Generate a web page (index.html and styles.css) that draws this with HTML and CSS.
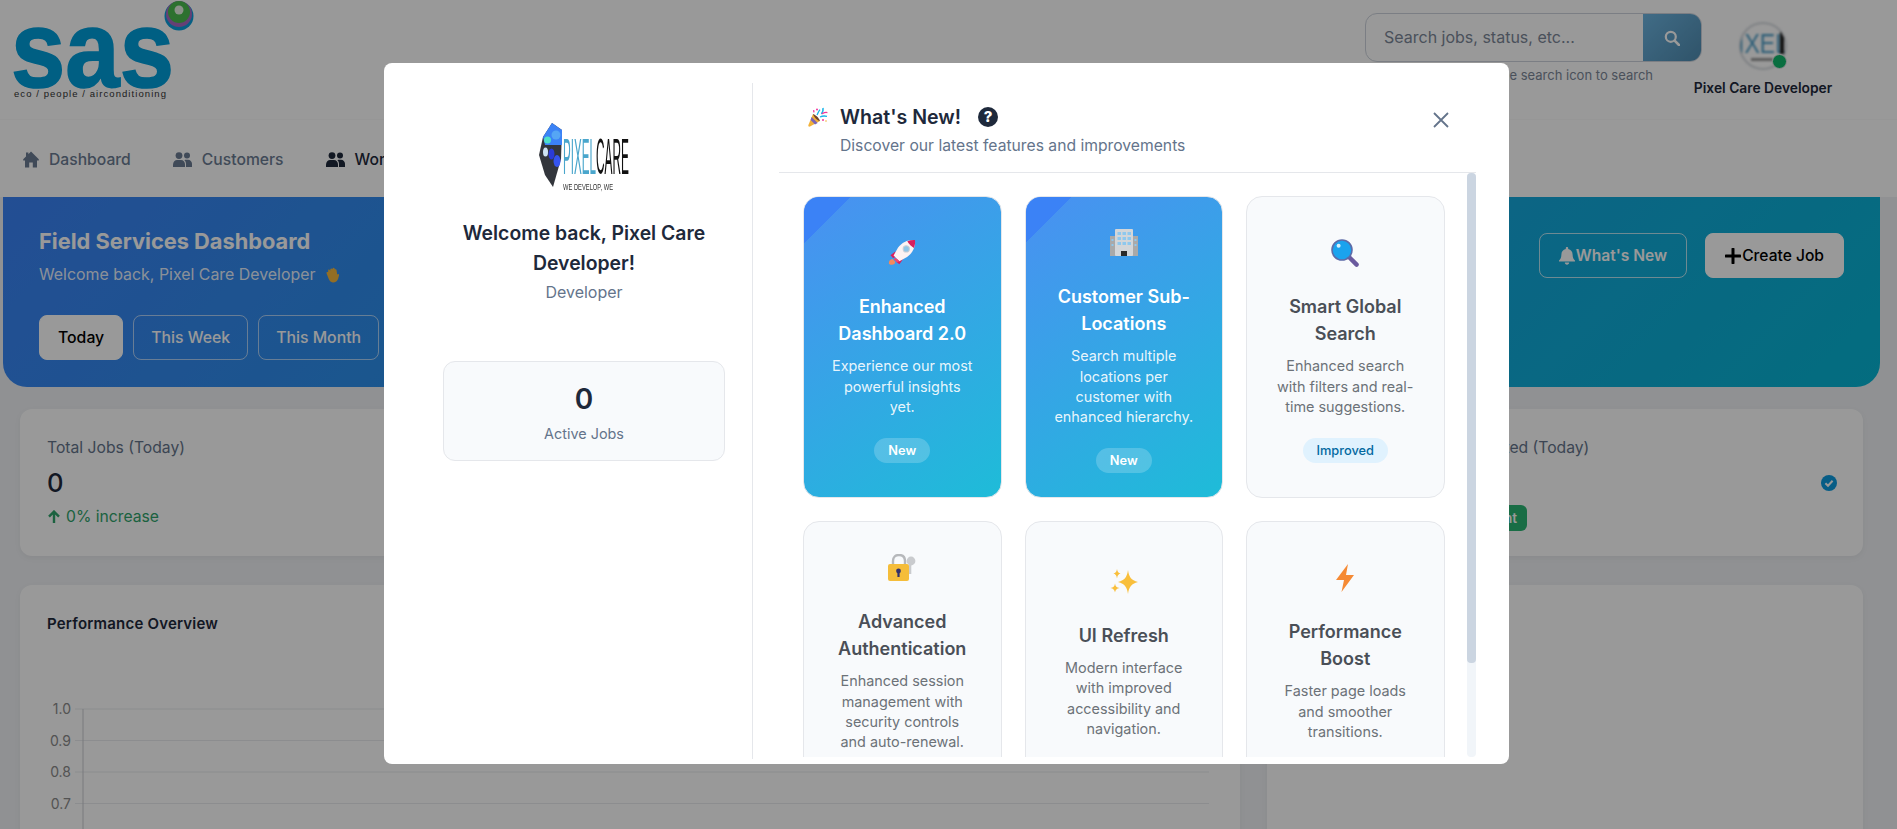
FILE: index.html
```html
<!DOCTYPE html>
<html lang="en">
<head>
    <meta charset="UTF-8">
    <meta name="viewport" content="width=device-width, initial-scale=1.0">
    <title>Field Services Dashboard</title>
    <link rel="stylesheet" href="styles.css">
</head>
<body>
    <header class="top-header">
        <svg class="brand" viewBox="0 0 200 110" width="200" height="110">
            <circle cx="179" cy="16" r="14.5" fill="#0a9fdc"/>
            <circle cx="179" cy="14" r="13" fill="#a86bc4"/>
            <circle cx="179" cy="12" r="11" fill="#4bbd4f"/>
            <circle cx="179" cy="10" r="4.5" fill="#e8f2e4"/>
            <text class="brand-word" x="11" y="74" textLength="163" lengthAdjust="spacingAndGlyphs" transform="scale(1 1.17)">sas</text>
            <text class="brand-tag" x="14" y="97" textLength="152">eco / people / airconditioning</text>
        </svg>
        <div class="header-right">
            <div class="search-col">
                <div class="search-box">
                    <span class="search-text">Search jobs, status, etc...</span>
                    <span class="search-btn">
                        <svg viewBox="0 0 16 16" width="16" height="16"><circle cx="6.8" cy="6.8" r="5" fill="none" stroke="#fff" stroke-width="2.2"/><path d="M10.6 10.6L15 15" stroke="#fff" stroke-width="2.6" stroke-linecap="round"/></svg>
                    </span>
                </div>
                <div class="search-hint">Press Enter or click the search icon to search</div>
            </div>
            <div class="user-col">
                <div class="avatar">
                    <svg viewBox="0 0 48 48" width="48" height="48">
                        <clipPath id="avatar-clip"><circle cx="24" cy="24" r="22.5"/></clipPath>
                        <circle cx="24" cy="24" r="23" fill="#fff" stroke="#d5d9de" stroke-width="2"/>
                        <g clip-path="url(#avatar-clip)">
                            <text class="avatar-word" x="24" y="31" text-anchor="middle" textLength="50" lengthAdjust="spacingAndGlyphs">IXEL</text>
                            <rect x="41" y="10" width="4" height="22" fill="#222"/>
                            <rect x="12" y="36" width="22" height="3" fill="#999"/>
                        </g>
                    </svg>
                    <span class="status-dot"></span>
                </div>
                <div class="user-name">Pixel Care Developer</div>
            </div>
        </div>
    </header>

    <nav class="main-nav">
        <a class="nav-link">
            <svg viewBox="0 0 16 17" width="16" height="17"><path d="M8 .6L15.8 8.2V9.4H14V16.4H9.8V11.4H6.2V16.4H2V9.4H.2V8.2L3 5.4V1.6H5.4V3.2Z" fill="currentColor"/></svg>
            Dashboard
        </a>
        <a class="nav-link">
            <svg viewBox="0 0 19 15" width="19" height="15"><use href="#people"/></svg>
            Customers
        </a>
        <a class="nav-link active">
            <svg viewBox="0 0 19 15" width="19" height="15"><use href="#people"/></svg>
            Work Orders
        </a>
    </nav>

    <svg class="defs"><defs>
        <g id="people" fill="currentColor">
            <circle cx="6" cy="3.6" r="3.4"/>
            <circle cx="14" cy="3.6" r="3"/>
            <path d="M0 15V12.6C0 9.8 2 8 4 8H8C10.2 8 12 9.8 12 12.6V15Z"/>
            <path d="M13 15V12C13 10.4 12.4 9 11.4 8.2 12 7.9 12.6 7.8 13.2 7.8H15C17.2 7.8 19 9.6 19 11.8V15Z"/>
        </g>
    </defs></svg>

    <section class="hero">
        <div>
            <h1>Field Services Dashboard</h1>
            <p class="hero-sub">Welcome back, Pixel Care Developer
                <svg class="hand" viewBox="0 0 14 15" width="15" height="16"><path d="M3 2.5C3.8 2 4.4 2.6 4.8 3.4L5 2C5.6 1 6.6 1.2 6.9 2.2L7.2 1.2C7.8.4 8.8.6 9 1.6L9.2 2.4C9.8 1.8 10.8 2.2 10.8 3.2L11.4 7C12 6.2 13.2 6.4 13.2 7.4 12.8 8.8 12.6 10.4 11.8 12 10.8 14 8.6 15 6.6 14.4 4.8 13.8 3.8 12.2 3.2 10.6L1.4 5.8C1.2 4.8 2.2 4.2 2.9 5Z" fill="#f5b83d"/></svg>
            </p>
            <div class="range-row">
                <button class="range-btn selected">Today</button>
                <button class="range-btn">This Week</button>
                <button class="range-btn">This Month</button>
            </div>
        </div>
        <div class="hero-actions">
            <button class="action-btn outline">
                <svg viewBox="0 0 16 18" width="16" height="18"><path d="M8 0C8.8 0 9.2.6 9.2 1.2V1.9C12 2.4 13.6 4.6 13.6 7.4 13.6 10.6 14.6 12 16 13.6V14.6H0V13.6C1.4 12 2.4 10.6 2.4 7.4 2.4 4.6 4 2.4 6.8 1.9V1.2C6.8.6 7.2 0 8 0ZM5.8 15.6H10.2C10.2 16.9 9.2 17.8 8 17.8S5.8 16.9 5.8 15.6Z" fill="currentColor"/></svg>
                What's New
            </button>
            <button class="action-btn solid">
                <svg viewBox="0 0 16 16" width="16" height="16"><path d="M8 1V15M1 8H15" stroke="currentColor" stroke-width="3" stroke-linecap="round"/></svg>
                Create Job
            </button>
        </div>
    </section>

    <section class="stats">
        <div class="stat">
            <div class="stat-label">Total Jobs (Today)</div>
            <div class="stat-value">0</div>
            <div class="stat-trend">
                <svg viewBox="0 0 14 14" width="14" height="14"><path d="M7 13V2M2 6.6L7 1.6L12 6.6" fill="none" stroke="currentColor" stroke-width="2.4"/></svg>
                0% increase
            </div>
        </div>
        <div class="stat"></div>
        <div class="stat"></div>
        <div class="stat">
            <div class="stat-label">Completed (Today)</div>
            <div class="stat-line">
                <div class="stat-value">0</div>
                <svg viewBox="0 0 16 16" width="16" height="16"><circle cx="8" cy="8" r="8" fill="#0d9be0"/><path d="M4.4 8.2L7 10.8L11.6 5.8" fill="none" stroke="#fff" stroke-width="2"/></svg>
            </div>
            <span class="stat-badge">Excellent</span>
        </div>
    </section>

    <section class="lower">
        <div class="panel">
            <h3>Performance Overview</h3>
            <svg class="chart" viewBox="0 0 1166 200" width="1166" height="200">
                <g class="grid-lines">
                    <path d="M28 18H1162M28 49.5H1162M28 81H1162M28 112.5H1162M28 144H1162"/>
                </g>
                <path class="axis" d="M36 18V200"/>
                <g class="tick-labels">
                    <text x="24" y="23">1.0</text>
                    <text x="24" y="55">0.9</text>
                    <text x="24" y="86">0.8</text>
                    <text x="24" y="118">0.7</text>
                </g>
            </svg>
        </div>
        <div class="panel"></div>
    </section>

    <div class="overlay">
        <div class="modal">
            <aside class="modal-side">
                <svg class="side-logo" viewBox="0 0 90 70" width="90" height="70">
                    <path d="M13 0L23 7L22 36L14 64L6 52L0 32L4 14Z" fill="#33363c"/>
                    <path d="M13 0L23 7V22H6L4 14Z" fill="#3b82f6"/>
                    <circle cx="8.5" cy="17" r="3.5" fill="#4de0c8"/>
                    <circle cx="17" cy="12" r="4.5" fill="#55a6f5"/>
                    <ellipse cx="6.5" cy="29" rx="2.5" ry="4.5" fill="#cfe3f2"/>
                    <ellipse cx="12.5" cy="31" rx="3" ry="5.5" fill="#2a3bd8"/>
                    <ellipse cx="18" cy="38" rx="3.5" ry="6" fill="#3554ee"/>
                    <text class="logo-pixel" x="24" y="51" textLength="33" lengthAdjust="spacingAndGlyphs">PIXEL</text>
                    <text class="logo-care" x="57" y="51" textLength="33" lengthAdjust="spacingAndGlyphs">CARE</text>
                    <text class="logo-tag" x="24" y="67" textLength="50" lengthAdjust="spacingAndGlyphs">WE DEVELOP, WE</text>
                </svg>
                <h2 class="side-title">Welcome back, Pixel Care Developer!</h2>
                <div class="side-role">Developer</div>
                <div class="side-stat">
                    <div class="side-num">0</div>
                    <div class="side-stat-label">Active Jobs</div>
                </div>
            </aside>

            <div class="modal-main">
                <div class="modal-head">
                    <div class="head-text">
                        <div class="head-title">
                            <svg class="popper" viewBox="0 0 20 20" width="20" height="20">
                                <path d="M5 7L12 14L2 19.6C.8 20 0 19.2.4 18Z" fill="#f2b138"/>
                                <path d="M3.6 10L9.6 16L7 17.4L2.6 13Z" fill="#7a64b8"/>
                                <path d="M5 7C7.4 7.6 11 11 12 14C10 14 6.4 11 5 7Z" fill="#70432d"/>
                                <path d="M9 8C10 6 10.4 4.4 12 2.6M12 10C14 9 16 8.6 19 9.4" fill="none" stroke="#18b4ea" stroke-width="1.3"/>
                                <path d="M13.4 7C14.6 5.6 15.4 3.4 15 1" fill="none" stroke="#18b4ea" stroke-width="1.6"/>
                                <path d="M14 6.6C15.8 5.8 17 5 19.4 5.6M5.6 3.2L6 5.4" fill="none" stroke="#f0389b" stroke-width="1.3"/>
                                <circle cx="9" cy="2.4" r="1" fill="#f0389b"/>
                                <circle cx="15" cy="13" r="1" fill="#f0389b"/>
                                <circle cx="18" cy="14" r=".8" fill="#f2b138"/>
                            </svg>
                            <span>What's New!</span>
                            <svg class="help" viewBox="0 0 20 20" width="20" height="20">
                                <circle cx="10" cy="10" r="10" fill="#1e293b"/>
                                <text x="10" y="15.4" text-anchor="middle">?</text>
                            </svg>
                        </div>
                        <p class="head-sub">Discover our latest features and improvements</p>
                    </div>
                    <svg class="close" viewBox="0 0 16 16" width="16" height="16"><path d="M1 1L15 15M15 1L1 15" stroke="#64748b" stroke-width="1.8"/></svg>
                </div>

                <div class="feature-wrap">
                    <div class="feature-scroll">
                        <div class="feature-grid">
                            <div class="feature hot">
                                <div class="feature-icon">
                                    <svg viewBox="1 0 27 27" width="28" height="28">
                                        <path d="M2 24C1.4 21.6 3 19.6 5.4 19.4L8 22C8 24.6 5 26 2 24Z" fill="#f58a5c"/>
                                        <path d="M8 12L3.4 15.6L6 18.6L10 16Z" fill="#d81f5e"/>
                                        <path d="M15.4 19.6L12 24.4L8.8 22L11 17Z" fill="#d81f5e"/>
                                        <path d="M27 1C27.6 7 25 13.4 19.4 17.4L12 21.4L6.4 15.8L10.6 8.4C14.4 3 20.8.4 27 1Z" fill="#fdf3f3"/>
                                        <path d="M27 1C27.4 3.4 27 6 26 8.6C24 7.6 21 5 19.6 2.2C22 1.2 24.6.8 27 1Z" fill="#d81f5e"/>
                                        <path d="M8 18.2L12 21.4L9.6 22.6L6.6 19.6Z" fill="#f0476f"/>
                                        <circle cx="18.6" cy="9.6" r="3" fill="#90c6e8" stroke="#c9cfd6"/>
                                    </svg>
                                </div>
                                <h4>Enhanced Dashboard 2.0</h4>
                                <p>Experience our most powerful insights yet.</p>
                                <span class="tag">New</span>
                            </div>
                            <div class="feature hot">
                                <div class="feature-icon">
                                    <svg viewBox="0 0 28 28" width="28" height="28">
                                        <rect x="0" y="7" width="28" height="20" fill="#a9a9a9"/>
                                        <rect x="5" y="0" width="18" height="27" rx="1" fill="#d3d6d9"/>
                                        <g fill="#8ec8ee">
                                            <rect x="7.5" y="3" width="3.5" height="3"/><rect x="12.5" y="3" width="3.5" height="3"/><rect x="17.5" y="3" width="3.5" height="3"/>
                                            <rect x="7.5" y="8" width="3.5" height="3"/><rect x="12.5" y="8" width="3.5" height="3"/><rect x="17.5" y="8" width="3.5" height="3"/>
                                            <rect x="7.5" y="13" width="3.5" height="3"/><rect x="12.5" y="13" width="3.5" height="3"/><rect x="17.5" y="13" width="3.5" height="3"/>
                                            <rect x="1.5" y="10" width="2" height="2"/><rect x="1.5" y="15" width="2" height="2"/><rect x="24.5" y="10" width="2" height="2"/><rect x="24.5" y="15" width="2" height="2"/>
                                        </g>
                                        <rect x="11" y="22" width="6" height="5" fill="#2a2a2a"/>
                                    </svg>
                                </div>
                                <h4>Customer Sub-Locations</h4>
                                <p>Search multiple locations per customer with enhanced hierarchy.</p>
                                <span class="tag">New</span>
                            </div>
                            <div class="feature">
                                <div class="feature-icon">
                                    <svg viewBox="0 0 28 28" width="28" height="28">
                                        <path d="M18 18L25.6 25.6" stroke="#6a5a9e" stroke-width="4.4" stroke-linecap="round"/>
                                        <circle cx="11" cy="11" r="10" fill="#1aa3ee" stroke="#5c6ba8" stroke-width="1.6"/>
                                        <circle cx="7.6" cy="6.8" r="2" fill="#d6f2ff"/>
                                    </svg>
                                </div>
                                <h4>Smart Global Search</h4>
                                <p>Enhanced search with filters and real-time suggestions.</p>
                                <span class="tag light">Improved</span>
                            </div>
                            <div class="feature">
                                <div class="feature-icon">
                                    <svg viewBox="0 0 28 28" width="28" height="28">
                                        <path d="M22 7V20" stroke="#c9cbce" stroke-width="2.6"/>
                                        <circle cx="23" cy="7" r="4.4" fill="#c9cbce"/>
                                        <path d="M5 12V7C5 3 7.4 1 11 1S17 3 17 7V12" fill="none" stroke="#b6b8bb" stroke-width="2.4"/>
                                        <rect x="0" y="10" width="21" height="17" rx="2" fill="#f5bd3a"/>
                                        <circle cx="10.5" cy="17" r="2.4" fill="#34306b"/>
                                        <rect x="9.4" y="17" width="2.2" height="6" fill="#34306b"/>
                                    </svg>
                                </div>
                                <h4>Advanced Authentication</h4>
                                <p>Enhanced session management with security controls<br>and auto-renewal.</p>
                                <span class="tag light">Improved</span>
                            </div>
                            <div class="feature">
                                <div class="feature-icon">
                                    <svg viewBox="0 0 28 26" width="28" height="26">
                                        <path d="M18 1C19 8 21 11 28 13C21 15 19 18 18 25C17 18 15 15 8 13C15 11 17 8 18 1Z" fill="#f9bf3c"/>
                                        <path d="M7 0C7.5 3 8.6 4 10.6 4.6C8.6 5.2 7.5 6.2 7 9.4C6.5 6.2 5.4 5.2 3.4 4.6C5.4 4 6.5 3 7 0Z" fill="#f9bf3c"/>
                                        <path d="M5 14.4C5.5 17.4 6.6 18.4 9.6 19C6.6 19.6 5.5 20.6 5 23.6C4.5 20.6 3.4 19.6 .4 19C3.4 18.4 4.5 17.4 5 14.4Z" fill="#f9bf3c"/>
                                    </svg>
                                </div>
                                <h4>UI Refresh</h4>
                                <p>Modern interface with improved accessibility and navigation.</p>
                                <span class="tag light">Improved</span>
                            </div>
                            <div class="feature">
                                <div class="feature-icon">
                                    <svg viewBox="0 0 28 28" width="28" height="28">
                                        <path d="M17 0L5 16H13L10.5 28L23 11H15Z" fill="#f58a35"/>
                                    </svg>
                                </div>
                                <h4>Performance Boost</h4>
                                <p>Faster page loads and smoother transitions.</p>
                                <span class="tag light">Improved</span>
                            </div>
                        </div>
                    </div>
                    <div class="bar"><div class="bar-thumb"></div></div>
                </div>
            </div>
        </div>
    </div>
</body>
</html>
```

FILE: styles.css
```css
* {
    box-sizing: border-box;
}
html, body {
    height: 829px;
    overflow: hidden;
}
body {
    margin: 0;
    font-family: Inter, "Noto Sans", sans-serif;
    background-color: #f0f2f5;
    color: #1e293b;
}
h1, h2, h3, h4, p {
    margin: 0;
}
button {
    font-family: inherit;
}
.defs {
    display: block;
    width: 0;
    height: 0;
}

/* header */
.top-header {
    height: 120px;
    background: #fff;
    border-bottom: 1px solid #fafafa;
    display: flex;
    justify-content: space-between;
    padding: 0 73px 0 0;
}
.brand-word {
    font-family: "Liberation Sans", Arial, sans-serif;
    font-weight: 700;
    font-size: 93px;
    fill: #009edb;
    stroke: #009edb;
    stroke-width: 1.4px;
}
.brand-tag {
    font-family: "Liberation Sans", Arial, sans-serif;
    font-size: 9.5px;
    fill: #333;
}
.header-right {
    display: flex;
    padding-top: 13px;
}
.search-col {
    width: 337px;
}
.search-box {
    height: 49px;
    display: flex;
    border: 1px solid #cdd3dc;
    border-radius: 12px;
    overflow: hidden;
}
.search-text {
    flex: 1;
    padding-left: 18px;
    line-height: 47px;
    font-size: 16px;
    color: #7c8798;
}
.search-btn {
    width: 58px;
    display: flex;
    align-items: center;
    justify-content: center;
    background: linear-gradient(135deg, #6cb4e0, #4f8bb0);
}
.search-hint {
    margin-top: 4px;
    padding-right: 49px;
    line-height: 18px;
    font-size: 13px;
    text-align: right;
    color: #7c8798;
    white-space: nowrap;
}
.user-col {
    width: 122px;
    padding-top: 9px;
    display: flex;
    flex-direction: column;
    align-items: center;
}
.avatar {
    position: relative;
    width: 48px;
    height: 48px;
}
.avatar svg {
    display: block;
    filter: blur(0.8px);
}
.avatar-word {
    font-family: "Liberation Sans", Arial, sans-serif;
    font-size: 28px;
    fill: #4f9fc8;
}
.status-dot {
    position: absolute;
    right: 0;
    bottom: 1px;
    width: 15px;
    height: 15px;
    border-radius: 50%;
    background: #0fb76b;
    border: 1px solid #e8e8e8;
}
.user-name {
    margin-top: 8px;
    font-size: 13.8px;
    font-weight: 600;
    line-height: 20px;
    white-space: nowrap;
}

/* nav */
.main-nav {
    height: 77px;
    background: #fff;
    display: flex;
    align-items: center;
    gap: 42px;
    padding: 1px 0 0 23px;
}
.nav-link {
    display: flex;
    align-items: center;
    gap: 10px;
    font-size: 15.7px;
    font-weight: 500;
    color: #6b7c93;
    white-space: nowrap;
}
.nav-link.active {
    color: #1e293b;
}

/* hero */
.hero {
    height: 190px;
    width: 1877px;
    margin-left: 3px;
    padding: 25px 36px 27px;
    display: flex;
    justify-content: space-between;
    align-items: flex-start;
    background: linear-gradient(135deg, #3b82f6, #06b6d4);
    border-radius: 0 0 24px 24px;
    color: #fff;
}
.hero h1 {
    font-size: 21.8px;
    font-weight: 700;
    line-height: 36px;
    padding-top: 1px;
}
.hero-sub {
    margin-top: 4px;
    font-size: 15.9px;
    line-height: 24px;
    color: rgba(255, 255, 255, 0.9);
}
.hand {
    margin-left: 5px;
    vertical-align: -3px;
}
.range-row {
    display: flex;
    gap: 10px;
    margin-top: 28px;
}
.range-btn {
    height: 45px;
    padding: 0 17px;
    background: transparent;
    border: 1px solid rgba(255, 255, 255, 0.6);
    border-radius: 8px;
    color: #fff;
    font-size: 15.8px;
    font-weight: 500;
}
.range-btn.selected {
    padding: 0 18px;
    background: #fff;
    border-color: #fff;
    color: #000;
}
.hero-actions {
    display: flex;
    gap: 18px;
    margin-top: 11px;
}
.action-btn {
    height: 45px;
    padding: 0 19px;
    display: flex;
    align-items: center;
    gap: 1px;
    border-radius: 8px;
    font-size: 15.6px;
    font-weight: 600;
}
.action-btn.outline {
    background: transparent;
    border: 1px solid rgba(255, 255, 255, 0.7);
    color: #fff;
}
.action-btn.solid {
    background: #fff;
    border: 1px solid #fff;
    color: #000;
    font-weight: 500;
}

/* stats */
.stats {
    display: grid;
    grid-template-columns: repeat(4, 1fr);
    gap: 24px;
    margin: 22px 34px 0 20px;
}
.stat {
    height: 147px;
    padding: 27px;
    background: #fff;
    border-radius: 12px;
    box-shadow: 0 2px 6px rgba(0, 0, 0, 0.05);
}
.stat-label {
    font-size: 15.7px;
    line-height: 24px;
    color: #64748b;
}
.stat-value {
    margin-top: 5px;
    font-size: 25.6px;
    font-weight: 500;
    line-height: 36px;
}
.stat-trend {
    margin-top: 4px;
    display: flex;
    align-items: center;
    gap: 5px;
    font-size: 15.7px;
    line-height: 24px;
    color: #2fa36b;
}
.stat-line {
    display: flex;
    justify-content: space-between;
    align-items: center;
}
.stat-line svg {
    margin-top: 5px;
    margin-right: -1px;
}
.stat-badge {
    display: inline-block;
    margin-top: 4px;
    padding: 0 10px;
    height: 26px;
    line-height: 26px;
    border-radius: 6px;
    background: #2bb673;
    color: #fff;
    font-size: 13.6px;
    font-weight: 600;
}

/* lower panels */
.lower {
    display: grid;
    grid-template-columns: 1220px 1fr;
    gap: 27px;
    margin: 29px 34px 0 20px;
}
.panel {
    height: 400px;
    padding: 29px 27px;
    background: #fff;
    border-radius: 12px;
    box-shadow: 0 2px 6px rgba(0, 0, 0, 0.05);
}
.panel h3 {
    font-size: 15px;
    font-weight: 600;
    line-height: 20px;
    letter-spacing: 0.2px;
}
.chart {
    display: block;
    margin-top: 57px;
}
.grid-lines path {
    stroke: #e9ebee;
    fill: none;
}
.axis {
    stroke: #c9ccd1;
    fill: none;
}
.tick-labels text {
    font-size: 14px;
    fill: #8a8a8a;
    text-anchor: end;
}

/* modal */
.overlay {
    position: fixed;
    inset: 0;
    background: rgba(0, 0, 0, 0.4);
    padding: 63px 0 0 384px;
}
.modal {
    width: 1125px;
    height: 701px;
    background: #fff;
    border-radius: 8px;
    display: flex;
    padding: 20px 33px 5px 30px;
}
.modal-side {
    width: 339px;
    padding: 40px 27px 0 29px;
    border-right: 1px solid #e5e7eb;
    display: flex;
    flex-direction: column;
    align-items: center;
    text-align: center;
}
.side-logo {
    display: block;
    filter: blur(0.4px);
}
.logo-pixel {
    font-family: "Liberation Sans", Arial, sans-serif;
    font-size: 50px;
    fill: #4aa6cc;
}
.logo-care {
    font-family: "Liberation Sans", Arial, sans-serif;
    font-size: 50px;
    fill: #111;
}
.logo-tag {
    font-family: "Liberation Sans", Arial, sans-serif;
    font-size: 9px;
    fill: #333;
}
.side-title {
    margin-top: 25px;
    font-size: 19.4px;
    font-weight: 600;
    line-height: 30px;
    color: #1e293b;
}
.side-role {
    margin-top: 3px;
    font-size: 16px;
    line-height: 22px;
    color: #64748b;
}
.side-stat {
    width: 282px;
    height: 100px;
    margin-top: 58px;
    padding-top: 19px;
    background: #f8fafc;
    border: 1px solid #e5e7eb;
    border-radius: 12px;
}
.side-num {
    font-size: 28px;
    font-weight: 600;
    line-height: 36px;
}
.side-stat-label {
    margin-top: 6px;
    font-size: 14.4px;
    line-height: 22px;
    color: #64748b;
}
.modal-main {
    flex: 1;
    margin-left: 26px;
    display: flex;
    flex-direction: column;
    min-width: 0;
}
.modal-head {
    height: 90px;
    flex: none;
    display: flex;
    justify-content: space-between;
    padding: 22px 27px 0 26px;
    border-bottom: 1px solid #e5e7eb;
    align-items: flex-start;
}
.head-title {
    display: flex;
    align-items: center;
    font-size: 19.6px;
    font-weight: 600;
    line-height: 24px;
}
.popper {
    margin-left: 3px;
    margin-right: 12px;
    flex: none;
}
.help {
    margin-left: 17px;
}
.help text {
    font-size: 15px;
    font-weight: 800;
    fill: #fff;
}
.head-sub {
    margin-top: 6px;
    margin-left: 35px;
    font-size: 15.7px;
    line-height: 22px;
    color: #64748b;
}
.close {
    margin-top: 7px;
}
.feature-wrap {
    height: 584px;
    display: flex;
}
.feature-scroll {
    flex: 1;
    overflow: hidden;
    padding: 23px 0 0 24px;
}
.bar {
    width: 9px;
    background: #f1f5f9;
    border-radius: 4px;
}
.bar-thumb {
    height: 490px;
    background: #cbd5e1;
    border-radius: 4px;
}
.feature-grid {
    display: grid;
    grid-template-columns: repeat(3, 198.5px);
    gap: 23px;
}
.feature {
    position: relative;
    overflow: hidden;
    height: 302px;
    padding: 0 26px;
    display: flex;
    flex-direction: column;
    align-items: center;
    justify-content: center;
    text-align: center;
    background: #f8fafc;
    border: 1px solid #e5e7eb;
    border-radius: 16px;
}
.feature.hot {
    background: linear-gradient(145deg, #4a90f2, #1ebcd8);
    color: #fff;
}
.feature.hot::before {
    content: "";
    position: absolute;
    top: 0;
    left: 0;
    width: 46px;
    height: 46px;
    background: linear-gradient(135deg, #3b82f6 50%, transparent 50%);
}
.feature-icon {
    height: 44px;
    margin-bottom: 18px;
    display: flex;
    align-items: center;
    justify-content: center;
}
.feature h4 {
    margin: 0 -10px;
    font-size: 18px;
    font-weight: 600;
    line-height: 27px;
    color: #4a4f57;
}
.feature p {
    margin-top: 9px;
    font-size: 14.4px;
    line-height: 20.4px;
    color: #6c7278;
}
.feature.hot h4 {
    color: #fff;
}
.feature.hot p {
    color: rgba(255, 255, 255, 0.9);
}
.tag {
    margin-top: 20px;
    height: 25px;
    line-height: 25px;
    padding: 0 14px;
    border-radius: 13px;
    background: rgba(255, 255, 255, 0.2);
    color: #fff;
    font-size: 12.8px;
    font-weight: 600;
}
.tag.light {
    background: #e0f2fe;
    color: #0369a1;
    font-weight: 500;
}
```
